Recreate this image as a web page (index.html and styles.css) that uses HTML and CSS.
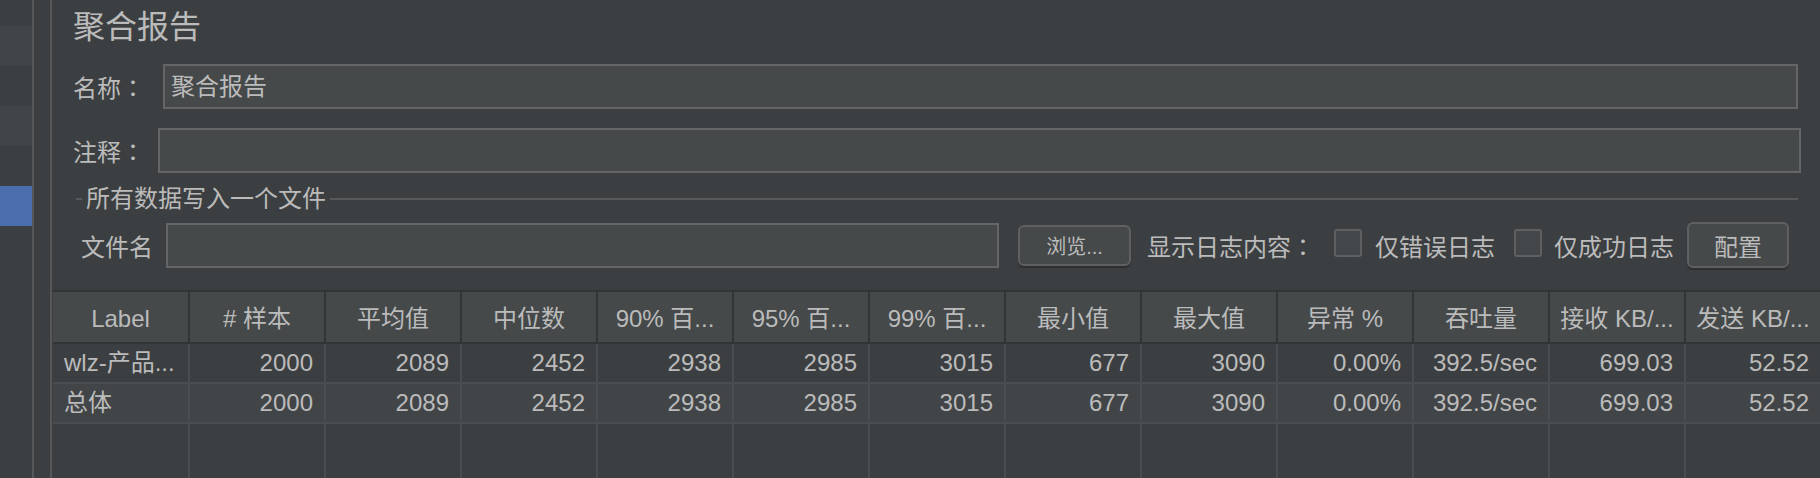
FILE: index.html
```html
<!DOCTYPE html>
<html lang="zh-CN">
<head>
<meta charset="utf-8">
<title>聚合报告</title>
<link rel="stylesheet" href="styles.css">
</head>
<body>
<div class="app">
  <div class="sidebar">
    <div class="srow s-top"></div>
    <div class="srow alt"></div>
    <div class="srow"></div>
    <div class="srow alt"></div>
    <div class="srow"></div>
    <div class="srow sel"></div>
    <div class="srow fill"></div>
  </div>
  <div class="gutter"></div>
  <div class="main">
    <div class="title">聚合报告</div>
    <div class="field name-row">
      <span class="label">名称<span class="colon" lang="ja">：</span></span>
      <div class="input">聚合报告</div>
    </div>
    <div class="field comment-row">
      <span class="label">注释<span class="colon" lang="ja">：</span></span>
      <div class="input"></div>
    </div>
    <div class="section">
      <span class="seg"></span>
      <span class="section-title">所有数据写入一个文件</span>
      <span class="line"></span>
    </div>
    <div class="file-row">
      <span class="label">文件名</span>
      <div class="input file-input"></div>
      <button class="btn browse">浏览...</button>
      <span class="text log-label">显示日志内容<span class="colon" lang="ja">：</span></span>
      <span class="checkbox"></span>
      <span class="text cb-text">仅错误日志</span>
      <span class="checkbox"></span>
      <span class="text cb-text2">仅成功日志</span>
      <button class="btn config">配置</button>
    </div>
    <div class="table">
      <div class="th">Label</div>
      <div class="th"># 样本</div>
      <div class="th">平均值</div>
      <div class="th">中位数</div>
      <div class="th">90% 百...</div>
      <div class="th">95% 百...</div>
      <div class="th">99% 百...</div>
      <div class="th">最小值</div>
      <div class="th">最大值</div>
      <div class="th">异常 %</div>
      <div class="th">吞吐量</div>
      <div class="th">接收 KB/...</div>
      <div class="th">发送 KB/...</div>

      <div class="td lbl">wlz-产品...</div>
      <div class="td">2000</div>
      <div class="td">2089</div>
      <div class="td">2452</div>
      <div class="td">2938</div>
      <div class="td">2985</div>
      <div class="td">3015</div>
      <div class="td">677</div>
      <div class="td">3090</div>
      <div class="td">0.00%</div>
      <div class="td">392.5/sec</div>
      <div class="td">699.03</div>
      <div class="td">52.52</div>

      <div class="td lbl odd">总体</div>
      <div class="td odd">2000</div>
      <div class="td odd">2089</div>
      <div class="td odd">2452</div>
      <div class="td odd">2938</div>
      <div class="td odd">2985</div>
      <div class="td odd">3015</div>
      <div class="td odd">677</div>
      <div class="td odd">3090</div>
      <div class="td odd">0.00%</div>
      <div class="td odd">392.5/sec</div>
      <div class="td odd">699.03</div>
      <div class="td odd">52.52</div>

      <div class="tf"></div><div class="tf"></div><div class="tf"></div><div class="tf"></div>
      <div class="tf"></div><div class="tf"></div><div class="tf"></div><div class="tf"></div>
      <div class="tf"></div><div class="tf"></div><div class="tf"></div><div class="tf"></div>
      <div class="tf"></div>
    </div>
  </div>
</div>
</body>
</html>
```
FILE: styles.css
```css
* { box-sizing: border-box; }
html, body {
  margin: 0;
  padding: 0;
  background: #3c3f41;
  width: 1820px;
  height: 478px;
  overflow: hidden;
}
body {
  font-family: "Liberation Sans", "Noto Sans CJK SC", sans-serif;
  font-size: 24px;
  color: #bbbbbb;
}
.app {
  display: flex;
  height: 478px;
}
.sidebar {
  width: 34px;
  flex: none;
  display: flex;
  flex-direction: column;
  border-right: 2px solid #555759;
}
.srow { height: 40px; flex: none; background: #3c3f41; }
.srow.s-top { height: 26px; }
.srow.alt { background: #424547; }
.srow.sel { background: #4b6eaf; }
.srow.fill { flex: 1; }
.gutter {
  width: 18px;
  flex: none;
  border-right: 2px solid #555759;
}
.main {
  flex: 1;
  min-width: 0;
  overflow: hidden;
  display: flex;
  flex-direction: column;
}
.title {
  margin-top: 7px;
  height: 40px;
  line-height: 40px;
  font-size: 32px;
  padding-left: 21px;
  white-space: nowrap;
}
.field {
  display: flex;
  align-items: center;
  height: 45px;
  padding-left: 21px;
}
.name-row { margin-top: 17px; padding-right: 22px; }
.comment-row { margin-top: 19px; padding-right: 19px; }
.label { white-space: nowrap; flex: none; }
.colon { font-family: "Noto Sans CJK JP", "Noto Sans CJK SC", sans-serif; }
.input {
  flex: 1;
  height: 45px;
  background: #45494a;
  border: 2px solid #646566;
  line-height: 41px;
  padding-left: 6px;
  white-space: nowrap;
}
.name-row .input { margin-left: 18px; }
.comment-row .input { margin-left: 13px; }
.section {
  margin-top: 14px;
  height: 24px;
  display: flex;
  align-items: center;
  padding-left: 24px;
  padding-right: 22px;
}
.seg { width: 6px; height: 2px; background: #58595b; flex: none; }
.line { flex: 1; height: 2px; background: #58595b; }
.section-title { margin: 0 4px; line-height: 24px; white-space: nowrap; }
.file-row {
  margin-top: 11px;
  height: 46px;
  display: flex;
  align-items: center;
  padding-left: 29px;
  padding-right: 31px;
}
.file-input { margin-left: 13px; }
.btn {
  font-family: inherit;
  color: #bbbbbb;
  background: #45494a;
  border: 2px solid #5e6062;
  border-radius: 6px;
  box-shadow: 0 2px 1px rgba(0, 0, 0, 0.25);
  padding: 0;
  flex: none;
}
.browse {
  margin-left: 19px;
  width: 113px;
  height: 41px;
  font-size: 20px;
}
.config {
  margin-left: 13px;
  width: 102px;
  height: 46px;
  font-size: 24px;
}
.text { white-space: nowrap; flex: none; }
.log-label { margin-left: 16px; }
.checkbox {
  width: 28px;
  height: 28px;
  flex: none;
  margin-left: 19px;
  margin-top: -5px;
  border: 2px solid #5e6062;
  border-radius: 3px;
  background: #43474a;
}
.cb-text { margin-left: 13px; }
.cb-text2 { margin-left: 12px; }
.table {
  margin-top: 22px;
  margin-left: 1px;
  flex: 1;
  display: grid;
  grid-template-columns: 137px repeat(12, 136px);
  grid-template-rows: 54px 40px 40px 1fr;
}
.th {
  background: #45494a;
  border-top: 2px solid #323537;
  border-bottom: 2px solid #323537;
  border-right: 2px solid #323537;
  text-align: center;
  padding-top: 4px;
  line-height: 46px;
  white-space: nowrap;
  overflow: hidden;
}
.td {
  background: #3c3f41;
  border-right: 2px solid #4b4e50;
  border-bottom: 2px solid #4b4e50;
  text-align: right;
  padding-right: 11px;
  line-height: 38px;
  white-space: nowrap;
  overflow: hidden;
}
.td.odd { background: #424547; }
.td.lbl { text-align: left; padding-left: 11px; padding-right: 0; }
.tf {
  border-right: 2px solid #4b4e50;
}
```
